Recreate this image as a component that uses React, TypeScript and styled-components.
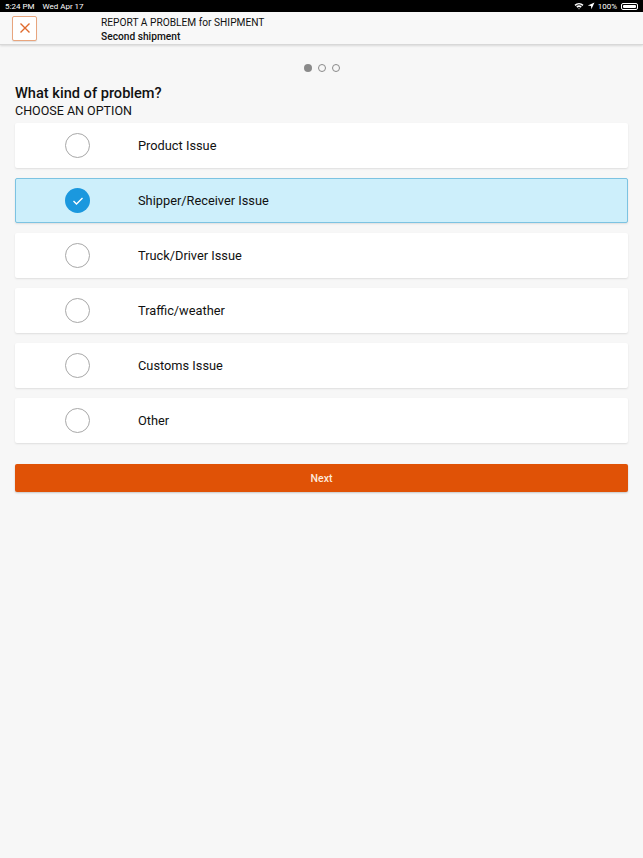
import React from "react";
import styled, { createGlobalStyle } from "styled-components";

const Global = createGlobalStyle`
  html, body { margin: 0; padding: 0; background: #f7f7f7; }
  body { font-family: Roboto, "Liberation Sans", sans-serif; color: #111; }
  * { box-sizing: border-box; }
`;

const Page = styled.div`
  width: 643px;
  min-height: 858px;
  background: #f7f7f7;
  display: flex;
  flex-direction: column;
`;

const StatusBar = styled.div`
  height: 12px;
  background: #000;
  color: #fff;
  font-size: 8px;
  display: flex;
  align-items: center;
  justify-content: space-between;
  padding: 0 5px 0 5px;
`;

const StatusLeft = styled.div`
  display: flex;
  gap: 8px;
`;

const StatusRight = styled.div`
  display: flex;
  align-items: center;
  gap: 3px;
`;

const Battery = styled.div`
  width: 17px;
  height: 7px;
  border: 1px solid #fff;
  border-radius: 2px;
  padding: 1px;
  margin-left: 1px;
  &::before {
    content: "";
    display: block;
    width: 100%;
    height: 100%;
    background: #fff;
    border-radius: 1px;
  }
`;

const Header = styled.div`
  height: 33px;
  background: #f8f8f8;
  border-bottom: 1px solid #d8d8d8;
  box-shadow: 0 1px 2px rgba(0, 0, 0, 0.12);
  display: flex;
  align-items: center;
  padding-left: 12px;
`;

const CloseButton = styled.button`
  width: 25px;
  height: 25px;
  border: 1px solid #e8a57e;
  border-radius: 2px;
  background: #fff;
  padding: 0;
  display: flex;
  align-items: center;
  justify-content: center;
  box-shadow: 0 1px 1px rgba(0, 0, 0, 0.1);
`;

const HeaderText = styled.div`
  margin-left: 64px;
  display: flex;
  flex-direction: column;
  gap: 2px;
  padding-top: 3px;
`;

const HeaderTitle = styled.div`
  font-size: 10.2px;
  color: #111;
  line-height: 12px;
`;

const HeaderSub = styled.div`
  font-size: 10.2px;
  font-weight: 500;
  color: #111;
  line-height: 12px;
`;

const Content = styled.div`
  padding: 0 15px 0 15px;
  display: flex;
  flex-direction: column;
`;

const Dots = styled.div`
  display: flex;
  justify-content: center;
  gap: 6px;
  margin-top: 19px;
  height: 8px;
  align-items: center;
`;

const Dot = styled.span<{ $active?: boolean }>`
  width: 8px;
  height: 8px;
  border-radius: 50%;
  background: ${(p) => (p.$active ? "#8a8a8a" : "transparent")};
  border: ${(p) => (p.$active ? "none" : "1.3px solid #8a8a8a")};
`;

const Question = styled.h1`
  margin: 13px 0 0 0;
  font-size: 14.6px;
  font-weight: 500;
  line-height: 17px;
  color: #111;
`;

const Choose = styled.div`
  font-size: 12.5px;
  line-height: 14px;
  margin-top: 2px;
  color: #111;
`;

const Options = styled.div`
  display: flex;
  flex-direction: column;
  gap: 10px;
  margin-top: 5px;
`;

const Option = styled.div<{ $selected?: boolean }>`
  height: 45px;
  display: flex;
  align-items: center;
  background: ${(p) => (p.$selected ? "#cdeffb" : "#fff")};
  border: 1px solid ${(p) => (p.$selected ? "#7cc3e2" : "transparent")};
  border-radius: 2px;
  box-shadow: 0 1px 2px rgba(0, 0, 0, 0.1);
  padding-left: 49px;
`;

const Radio = styled.span<{ $checked?: boolean }>`
  width: 25px;
  height: 25px;
  border-radius: 50%;
  border: ${(p) => (p.$checked ? "none" : "1px solid #a8a8a8")};
  background: ${(p) => (p.$checked ? "#1b98de" : "#fff")};
  display: flex;
  align-items: center;
  justify-content: center;
  flex-shrink: 0;
`;

const OptionLabel = styled.span`
  margin-left: 48px;
  font-size: 12.8px;
  color: #111;
`;

const NextButton = styled.button`
  margin-top: 21px;
  height: 28px;
  width: 100%;
  background: #e05206;
  border: none;
  border-radius: 2px;
  color: #fde9dc;
  font-family: Roboto, "Liberation Sans", sans-serif;
  font-size: 10.5px;
  font-weight: 500;
  box-shadow: 0 1px 2px rgba(0, 0, 0, 0.2);
`;

const options = [
  "Product Issue",
  "Shipper/Receiver Issue",
  "Truck/Driver Issue",
  "Traffic/weather",
  "Customs Issue",
  "Other",
];

export default function App() {
  const selected = 1;
  return (
    <Page>
      <Global />
      <StatusBar>
        <StatusLeft>
          <span>5:24 PM</span>
          <span>Wed Apr 17</span>
        </StatusLeft>
        <StatusRight>
          <svg width="10" height="8" viewBox="0 0 10 8">
            <path d="M0.5 2.8 A6.5 6.5 0 0 1 9.5 2.8 L8.4 3.9 A5 5 0 0 0 1.6 3.9 Z" fill="#fff" />
            <path d="M2.3 4.6 A4 4 0 0 1 7.7 4.6 L6.6 5.7 A2.5 2.5 0 0 0 3.4 5.7 Z" fill="#fff" />
            <path d="M4.2 6.5 A1.2 1.2 0 0 1 5.8 6.5 L5 7.4 Z" fill="#fff" />
          </svg>
          <svg width="8" height="8" viewBox="0 0 8 8">
            <path d="M7.5 0.5 L0.8 3.6 L4 4 L4.4 7.2 Z" fill="#fff" />
          </svg>
          <span>100%</span>
          <Battery />
        </StatusRight>
      </StatusBar>
      <Header>
        <CloseButton aria-label="close">
          <svg width="12" height="12" viewBox="0 0 12 12">
            <path d="M1.5 1.5 L10.5 10.5 M10.5 1.5 L1.5 10.5" stroke="#e06a2c" strokeWidth="1.4" />
          </svg>
        </CloseButton>
        <HeaderText>
          <HeaderTitle>REPORT A PROBLEM for SHIPMENT</HeaderTitle>
          <HeaderSub>Second shipment</HeaderSub>
        </HeaderText>
      </Header>
      <Content>
        <Dots>
          <Dot $active />
          <Dot />
          <Dot />
        </Dots>
        <Question>What kind of problem?</Question>
        <Choose>CHOOSE AN OPTION</Choose>
        <Options>
          {options.map((o, i) => (
            <Option key={o} $selected={i === selected}>
              <Radio $checked={i === selected}>
                {i === selected && (
                  <svg width="12" height="10" viewBox="0 0 12 10">
                    <path d="M1.5 5 L4.5 8 L10.5 2" stroke="#fff" strokeWidth="1.4" fill="none" />
                  </svg>
                )}
              </Radio>
              <OptionLabel>{o}</OptionLabel>
            </Option>
          ))}
        </Options>
        <NextButton>Next</NextButton>
      </Content>
    </Page>
  );
}
